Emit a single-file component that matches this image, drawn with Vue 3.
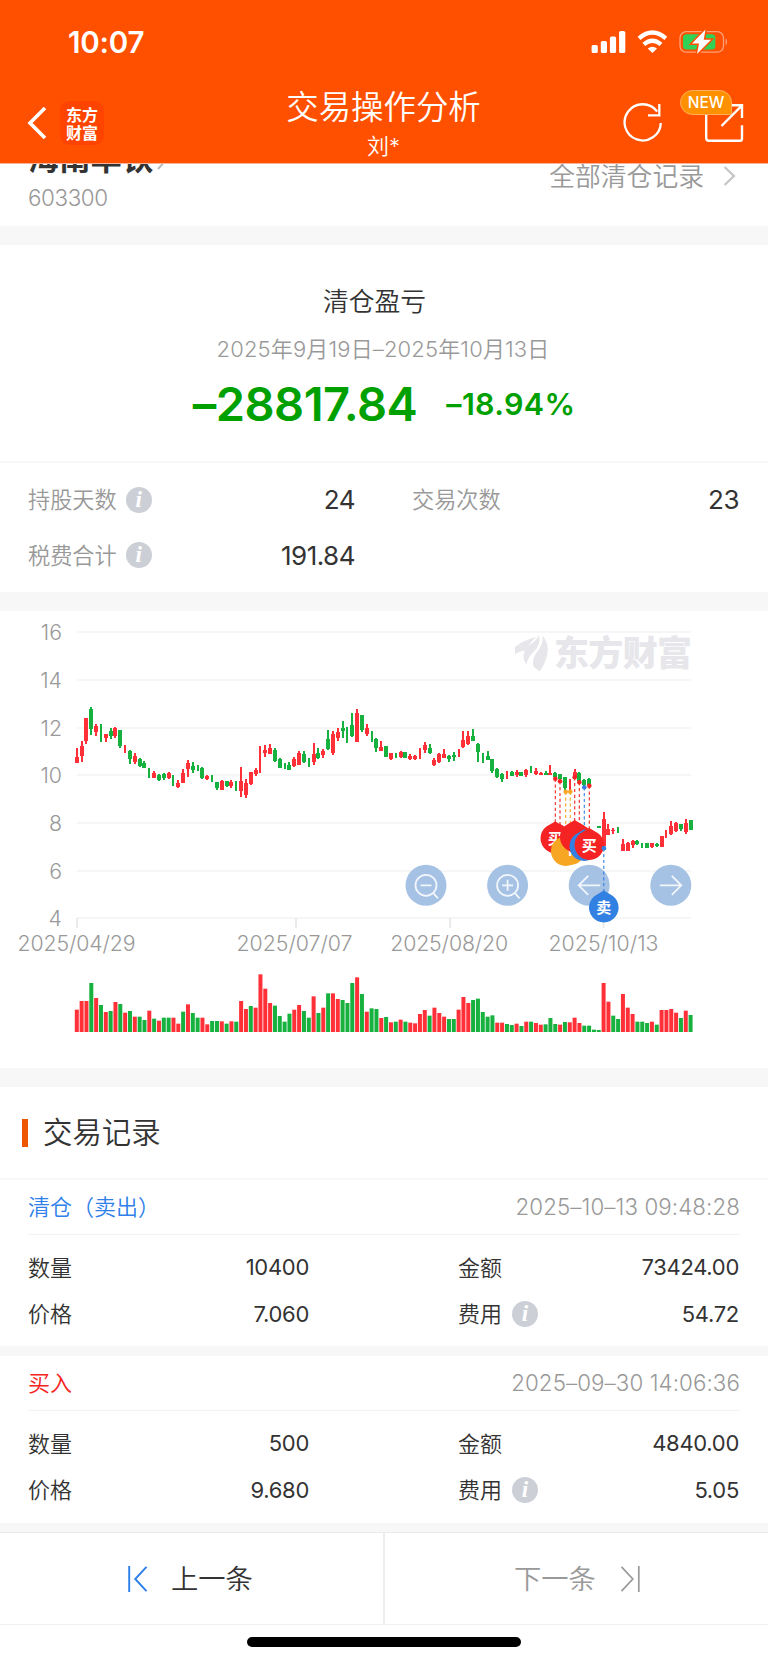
<script setup>
/**
 * 交易操作分析 — 个股清仓盈亏、K线买卖点与交易记录
 */
const UP = '#ff3037'
const DOWN = '#16b13e'
const STEP = 4.833
const FIRST_X = 76.8

// 每根K线: 涨跌, 最高, 最低, 实体上沿, 实体下沿 (单位 1/3 像素, 无实体时省略)
const candleSource = `
r411,455,437,455 r391,453,404,434 r322,398,322,390 g288,372,293,355 r340,376,346,362 g340,392 r368,393,368,382 g351,384,360,375
r349,382,350,376 g356,410,357,406 r402,425 g418,460,419,444 r427,459,434,452 g440,468,443,465 g449,470,455,470 g470,502
r480,500,487,500 g489,509,492,507 g485,507,490,500 r484,503,487,502 g492,524 r507,532,515,527 r475,517,486,517 r446,498,457,473
g453,487,464,478 g461,481 g469,503,470,500 r491,508,495,505 g492,514 g512,537,514,530 r507,538,509,537 g509,527,511,524
r506,530,513,524 g511,539 r468,558,511,541 r503,562,516,551 r483,521,484,520 r471,494,476,490 r404,485 r401,438,418,425
r398,430,411,428 g412,452,417,450 g441,472,445,470 g457,475 g454,478,462,478 r437,468,445,466 r419,463,427,461 g419,455,430,453
g442,469 r396,461,430,452 g412,443,425,440 r415,441,420,433 g357,417,384,415 r359,433,370,425 r350,391,363,380 g331,380,350,361
g349,396 g307,377,342,376 r294,394,306,393 g311,362,312,357 r340,376,350,370 g360,392 g382,422,383,412 r389,421,408,419
g405,439,406,438 r426,447,427,443 g425,441 r419,441,422,438 g423,441,424,440 r430,447,435,443 r432,446,434,445 r411,443
r392,426,403,417 g400,428,411,427 r440,466,446,461 r427,455,430,453 r415,442,428,440 g432,453,435,444 g423,451,431,439 r415,439
r360,411,386,408 r361,402,376,398 g355,390,374,389 g397,452,398,423 g426,456 g421,448,434,447 g443,485,444,480 g470,500,473,498
g485,514,490,505 r480,505 g480,495,482,494 r477,497,483,492 g482,496,484,495 r475,498,477,493 g464,486 r470,493,480,490
r483,493,486,491 g479,493,486,491 r463,492,486,491 g482,503,486,497 g488,510,489,503 g497,541,498,530 r503,540 r473,500,482,497
g484,515,485,510 g504,528,507,522 g501,524,503,521 - g646,652,646,652 r602,710,625,706 r640,673,655,671 r651,668,656,661
g647,667 r685,721,698,720 r693,721,696,720 r688,711,690,703 g688,702,691,698 g697,711 g695,711,697,710 r696,711,697,709
g696,708,698,706 r674,708,675,707 r657,681 r631,672,644,670 r633,664,636,660 g638,659,639,655 r623,670,635,664 g627,657,628,656`

const candles = candleSource.trim().split(/\s+/).map((s, i) => {
  if (s === '-') return null
  const [hi, lo, top, bottom] = s.slice(1).split(',').map((n) => Number(n) / 3)
  return { x: FIRST_X + i * STEP, color: s[0] === 'r' ? UP : DOWN, hi, lo, top, bottom }
}).filter(Boolean)

// 成交量: 涨跌 + 柱高 (1/3 像素)
const volumeSource = `
r67 r93 r93 g147 r102 g81 r60 g63 r90 g84 r58 g63 r46 g46 g36 r64 g40 r34 g43 g43 r43 r25 g61 r83 g57 g43 r43 r23 g33 g33 r32 g25
r32 g31 r93 r69 g78 r73 r173 r130 r87 g79 g48 g31 g55 r67 r81 g63 g43 r107 g57 r73 g116 r116 r99 g96 g87 g147 r164 g114 r61 g71 g69 r42
g45 r29 g31 r37 g31 r28 r26 r54 r66 g49 r73 r57 r46 g39 g39 r67 r105 r87 g96 g100 g60 g46 g50 r28 r28 g24 g21 r25 g18 r31 g31 r27
r22 g23 g42 g24 r22 g30 r29 r43 r27 g19 g19 g7 g6 r147 r91 g49 g39 r114 r73 r54 g31 g31 g27 r31 g22 r66 r66 r69 r58 g42 r64 g51`

const volumes = volumeSource.trim().split(/\s+/).map((s, i) => ({
  x: FIRST_X + i * STEP - 2,
  h: Number(s.slice(1)) / 3,
  color: s[0] === 'r' ? UP : DOWN,
}))

const yAxis = [
  { v: 16, y: 21 }, { v: 14, y: 69 }, { v: 12, y: 117 }, { v: 10, y: 164 },
  { v: 8, y: 212 }, { v: 6, y: 260 }, { v: 4, y: 307 },
]
const xAxis = [
  { d: '2025/04/29', x: 77, w: 118, tx: 76.5 }, { d: '2025/07/07', x: 296, w: 116, tx: 294.5 },
  { d: '2025/08/20', x: 450, w: 118, tx: 449.2 }, { d: '2025/10/13', x: 603.5, w: 110 },
]

const RED = '#f52323'
const ORANGE = '#f6a623'
const BLUE = '#3380e3'
const marks = [
  { x: 560, dot: 170.3, cy: 230, c: RED, t: '' },
  { x: 555.3, dot: 167.7, cy: 227.3, c: RED, t: '买' },
  { x: 565.7, dot: 180.7, cy: 240, c: ORANGE, t: '' },
  { x: 570.3, dot: 180.7, cy: 239, c: ORANGE, t: 'T' },
  { x: 574.7, dot: 166.3, cy: 226, c: RED, t: '' },
  { x: 579.3, dot: 171.3, cy: 229, c: RED, t: '' },
  { x: 584.3, dot: 176.3, cy: 235.2, c: BLUE, t: '' },
  { x: 589.3, dot: 174.7, cy: 234, c: RED, t: '买' },
  { x: 603.8, dot: 237.3, cy: 296.5, c: BLUE, t: '卖' },
]
const pin = 'M0 -16.9L6.3 -13.3A14.8 14.8 0 1 1 -6.3 -13.3Z'

const buttons = [{ x: 426, k: 'out' }, { x: 507.6, k: 'in' }, { x: 589.2, k: 'left' }, { x: 670.8, k: 'right' }]

const records = [
  { type: '清仓（卖出）', side: 'sell', time: '2025–10–13 09:48:28', qty: '10400', amount: '73424.00', price: '7.060', fee: '54.72' },
  { type: '买入', side: 'buy', time: '2025–09–30 14:06:36', qty: '500', amount: '4840.00', price: '9.680', fee: '5.05' },
]
</script>

<template>
  <div class="page">
    <header class="header">
      <div class="status">
        <span class="clock">10:07</span>
        <svg width="140" height="28" viewBox="0 0 140 28">
          <g fill="#fff">
            <rect x="1.6" y="17" width="6.2" height="8" rx="1.6" />
            <rect x="10.8" y="13" width="6.2" height="12" rx="1.6" />
            <rect x="19.9" y="8.5" width="6.2" height="16.5" rx="1.6" />
            <rect x="29.1" y="3" width="6.2" height="22" rx="1.6" />
            <path d="M62.4 25L57.7 20.6Q62.4 17 67.1 20.6Z" />
          </g>
          <g fill="none" stroke="#fff" stroke-width="4.3">
            <path d="M49 10.4Q62.4 -1.2 75.8 10.4" />
            <path d="M53.8 16.4Q62.4 9 71 16.4" />
          </g>
          <rect x="90" y="3.6" width="43.5" height="20.6" rx="6.2" fill="none" stroke="#ffa07b" stroke-width="1.3" />
          <path d="M135.6 10.2Q138.8 13.8 135.6 17.4Z" fill="#ffa07b" />
          <rect x="93" y="6.2" width="32.4" height="15.4" rx="3.5" fill="#31d158" />
          <path d="M115.5 1.5L102 15.6H109L107 26L121 11.7H113.7Z" fill="#fff" stroke="#ff5000" stroke-width="3" paint-order="stroke" />
        </svg>
      </div>
      <div class="navbar">
        <div class="nav-left">
          <svg width="20" height="34" viewBox="0 0 20 34"><path d="M18 2L3 17L18 32" fill="none" stroke="#fff" stroke-width="3.6" /></svg>
          <div class="logo"><span>东方</span><span>财富</span></div>
        </div>
        <div class="nav-title">
          <h1>交易操作分析</h1>
          <p>刘*</p>
        </div>
        <div class="nav-right">
          <svg width="42" height="42" viewBox="0 0 42 42" fill="none" stroke="#fff" stroke-width="2.3">
            <path d="M38.8 22A18.1 18.1 0 1 1 35.2 10.5" />
            <path d="M37.3 3V14.3H26" />
          </svg>
          <div class="share">
            <svg width="40" height="40" viewBox="0 0 40 40" fill="none" stroke="#fff" stroke-width="2.4">
              <path d="M2.2 12V35Q2.2 37.8 5 37.8H36Q38 37.8 38 35.5V22.3" />
              <path d="M27 2.3H38V15M38 2.3L17.5 23" />
            </svg>
            <span class="new">NEW</span>
          </div>
        </div>
      </div>
    </header>

    <section class="stock">
      <div>
        <div class="stock-name">海南华铁
          <svg width="12" height="22" viewBox="0 0 12 22"><path d="M1 1L10 11L1 21" fill="none" stroke="#bbb" stroke-width="2" /></svg>
        </div>
        <div class="stock-code">603300</div>
      </div>
      <div class="all">
        <span>全部清仓记录</span>
        <svg width="14" height="22" viewBox="0 0 14 22"><path d="M1.5 2L11 11L1.5 20" fill="none" stroke="#c4c4c4" stroke-width="2.2" /></svg>
      </div>
    </section>

    <section class="profit">
      <h2>清仓盈亏</h2>
      <p class="range">2025年9月19日–2025年10月13日</p>
      <div class="result"><span class="sum">–28817.84</span><span class="rate">–18.94%</span></div>
    </section>

    <section class="stats">
      <div class="stat"><span>持股天数</span><i class="info">i</i><b>24</b></div>
      <div class="stat"><span>交易次数</span><b>23</b></div>
      <div class="stat"><span>税费合计</span><i class="info">i</i><b>191.84</b></div>
    </section>

    <section class="chart">
      <svg width="768" height="457" viewBox="0 0 768 457">
        <g v-for="t in yAxis" :key="t.v">
          <line x1="77" x2="691" :y1="t.y" :y2="t.y" stroke="#f3f3f3" stroke-width="1.6" />
          <text class="axis" x="62" :y="t.y + 7.8" text-anchor="end">{{ t.v }}</text>
        </g>
        <g v-for="t in xAxis" :key="t.d">
          <line :x1="t.x" :x2="t.x" y1="307" y2="317" stroke="#e6e6e6" stroke-width="1.6" />
          <text class="axis" :x="(t.tx || t.x) - t.w / 2" y="340.2" :textLength="t.w">{{ t.d }}</text>
        </g>

        <g fill="#e6e6eb" transform="translate(0 -10.5)">
          <path d="M515 46.5Q522 40.5 536 36.5Q528 44 526.5 50Q520 50 515 54Z" />
          <path d="M539 34.8Q541.5 43 533.5 51.5Q528 56 526.5 64L523.5 58.5Q523 49 531 43.5Q536.5 40 539 34.8Z" />
          <path d="M542.5 35Q549 43 547.5 53Q545 64 539.5 71L533.5 66Q531.5 58 537.5 51Q543.5 44 542.5 35Z" />
          <text class="watermark" x="554" y="65.5" textLength="138">东方财富</text>
        </g>

        <g v-for="(c, i) in candles" :key="i" :fill="c.color" shape-rendering="crispEdges">
          <rect :x="c.x - 1" :y="c.hi" width="2" :height="c.lo - c.hi" />
          <rect v-if="c.top" :x="c.x - 2" :y="c.top" width="4" :height="c.bottom - c.top" />
        </g>

        <g v-for="b in buttons" :key="b.k" :transform="`translate(${b.x} 274.3)`" fill="none" stroke="#fff" stroke-opacity=".85" stroke-width="1.8">
          <circle r="20.5" fill="#a5c2e5" stroke="none" />
          <template v-if="b.k === 'out' || b.k === 'in'">
            <circle r="10.5" />
            <path :d="b.k === 'out' ? 'M-5.5 0H5.5M7.5 8L12 13' : 'M-5.5 0H5.5M0 -5.5V5.5M7.5 8L12 13'" />
          </template>
          <path v-else :d="b.k === 'left' ? 'M11 0H-10.5M-1 -9.5L-10.5 0L-1 9.5' : 'M-11 0H10.5M1 -9.5L10.5 0L1 9.5'" />
        </g>

        <g v-for="m in marks" :key="m.x">
          <line :x1="m.x" :x2="m.x" :y1="m.dot" :y2="m.cy - 16" :stroke="m.c" stroke-width="1.1" stroke-dasharray="3.2 2.6" />
          <circle :cx="m.x" :cy="m.dot" r="2.3" :fill="m.c" />
        </g>
        <g v-for="m in marks" :key="m.x" :transform="`translate(${m.x} ${m.cy})`">
          <path :d="pin" :fill="m.c" />
          <text v-if="m.t" class="pin-text" y="5.6" text-anchor="middle">{{ m.t }}</text>
        </g>
        <circle cx="603.8" cy="237.3" r="2.3" :fill="BLUE" />

        <rect v-for="v in volumes" :key="v.x" :x="v.x" :y="421 - v.h" width="4" :height="v.h" :fill="v.color" />
      </svg>
    </section>

    <section class="records">
      <div class="records-title"><h3><span>交易记录</span></h3></div>
      <article v-for="r in records" :key="r.time" class="record">
        <div class="record-head">
          <span :class="r.side">{{ r.type }}</span>
          <time>{{ r.time }}</time>
        </div>
        <div class="record-body">
          <div class="cell"><span>数量</span><b>{{ r.qty }}</b></div>
          <div class="cell"><span>金额</span><b>{{ r.amount }}</b></div>
          <div class="cell"><span>价格</span><b>{{ r.price }}</b></div>
          <div class="cell"><span>费用</span><i class="info">i</i><b>{{ r.fee }}</b></div>
        </div>
      </article>
    </section>

    <nav class="pager">
      <div class="prev">
        <svg width="20" height="28" viewBox="0 0 20 28" fill="none" stroke="#2b7fe8" stroke-width="1.9"><path d="M1.2 1V27M18.5 1.8L7.2 14L18.5 26.2" /></svg>
        <span>上一条</span>
      </div>
      <div class="next">
        <span>下一条</span>
        <svg width="20" height="28" viewBox="0 0 20 28" fill="none" stroke="#999" stroke-width="1.7"><path d="M18.8 1V27M1.5 1.8L12.8 14L1.5 26.2" /></svg>
      </div>
    </nav>
    <div class="home"><div class="home-bar" /></div>
  </div>
</template>

<style>
body { background: #fff; }
</style>

<style scoped>
.page { width: 768px; height: 1663px; overflow: hidden; background: #fff; color: #333; font-family: Inter, "Noto Sans CJK SC", sans-serif; font-weight: 350; }
h1, h2, h3, p { margin: 0; font-weight: 350; }
b { font-weight: 400; }
svg { display: block; flex: none; }

.header { height: 164px; background: #ff5000; color: #fff; border-bottom: 1px solid #f6b29a; box-sizing: border-box; }
.status { height: 84px; box-sizing: border-box; padding: 28px 38px 0 68px; display: flex; justify-content: space-between; }
.clock { font-size: 29.5px; line-height: 29px; font-weight: 600; letter-spacing: -0.2px; }
.navbar { height: 79px; display: grid; grid-template-columns: 1fr 220px 1fr; }
.nav-left { display: flex; align-items: flex-start; gap: 13px; padding: 17px 0 0 27px; }
.nav-left svg { margin-top: 5px; }
.logo { width: 44px; height: 44px; border-radius: 9px; background: #ff4400; display: flex; flex-direction: column; align-items: center; justify-content: center; font: 700 16px/18px "Noto Sans CJK SC", sans-serif; }
.nav-title { text-align: center; }
.nav-title h1 { font-size: 32.4px; line-height: 48px; margin-left: -1px; }
.nav-title p { font-size: 22px; line-height: 28px; margin-left: -1px; }
.nav-right { display: flex; justify-content: flex-end; gap: 40px; padding: 17px 24px 0 0; }
.share { position: relative; margin-top: 2px; }
.new { position: absolute; left: -24px; top: -13px; width: 52px; height: 25px; box-sizing: border-box; border: 1px solid #ffae5c; border-radius: 13px 13px 2px 13px; background: #ff9100; font-size: 15.5px; line-height: 23px; font-weight: 500; text-align: center; }

.stock { height: 62px; box-sizing: border-box; padding: 0 31px 0 28px; display: flex; justify-content: space-between; overflow: hidden; }
.stock-name { display: flex; align-items: center; gap: 4px; font-size: 31.3px; line-height: 40px; font-weight: 700; margin-top: -25px; }
.stock-code { font-size: 22.4px; line-height: 28px; margin-top: 5px; color: #999; letter-spacing: -0.4px; }
.all { display: flex; align-items: center; gap: 19px; height: 36px; margin-top: -6px; font-size: 25.8px; color: #999; }
.all span { padding-bottom: 4px; }

.profit { height: 179px; border-top: 19px solid #f7f7f7; border-bottom: 2px solid #f7f7f7; padding-top: 38px; box-sizing: border-box; height: 237px; display: flex; flex-direction: column; align-items: center; }
.profit h2 { font-size: 25.8px; line-height: 38px; margin-left: -19px; }
.range { font-size: 22px; line-height: 30px; margin: 13px 0 0 -2px; color: #999; letter-spacing: 0.15px; }
.result { display: flex; align-items: center; gap: 29px; margin-top: 11px; height: 56px; color: #00a000; white-space: nowrap; }
.sum { font-size: 47px; font-weight: 570; letter-spacing: -0.5px; }
.rate { font-size: 30.5px; font-weight: 570; letter-spacing: 0.3px; }

.stats { height: 129px; box-sizing: border-box; padding: 9px 29px 0 28px; display: grid; grid-template-columns: 327px 327px; column-gap: 57px; grid-auto-rows: 55.5px; }
.stat { display: flex; align-items: center; font-size: 22.2px; color: #999; }
.stat span { padding-bottom: 3px; }
.stat b { margin-left: auto; font-size: 26px; color: #333; letter-spacing: -0.5px; }
.info { width: 26px; height: 26px; margin-left: 9px; border-radius: 50%; background: #ccd0d6; color: #fff; font: italic 700 23px/25px "Liberation Serif", serif; text-align: center; }
.cell .info { margin-left: 10px; }

.chart { height: 457.5px; border-top: 18.5px solid #f7f7f7; border-bottom: 19px solid #f7f7f7; padding-top: 0.5px; }
.axis { font-size: 21.3px; fill: #999; }
.watermark { font-size: 35px; font-weight: 900; }
.pin-text { font-size: 15px; fill: #fff; font-weight: 700; }

.chart { height: 457px; border-top-width: 19px; padding-top: 0; }
.records-title { height: 91px; display: flex; align-items: center; padding-left: 22px; }
.records-title h3 { display: flex; align-items: center; gap: 15px; font-size: 29.4px; }
.records-title h3::before { content: ""; width: 6px; height: 28px; background: #ee5500; }
.records-title span { padding-bottom: 5px; }
.record { height: 166px; border-top: 2px solid #f7f7f7; border-bottom: 10px solid #f7f7f7; }
.record + .record { height: 167px; border-top: 0; border-bottom-width: 9px; }
.record-head { height: 54px; margin: 0 28px; border-bottom: 1px solid #f3f3f3; display: flex; align-items: center; justify-content: space-between; font-size: 22px; }
.record-head span { padding-bottom: 5px; }
.record-head time { font-size: 22.3px; color: #999; letter-spacing: 0.1px; padding-bottom: 1px; }
.sell { color: #2f80ea; }
.buy { color: #f52323; }
.record-body { padding: 9px 29px 0 28px; display: grid; grid-template-columns: 281px 281px; column-gap: 149px; grid-auto-rows: 46.5px; }
.cell { display: flex; align-items: center; font-size: 22px; }
.cell span { padding-bottom: 3px; }
.cell b { margin-left: auto; font-size: 22px; letter-spacing: -0.3px; }

.pager { height: 93px; box-sizing: border-box; border-top: 1px solid #eaeaea; border-bottom: 1px solid #f0f0f0; display: grid; grid-template-columns: 385px 1fr; font-size: 27.3px; }
.pager > div { display: flex; align-items: center; }
.pager span { padding-bottom: 3px; }
.prev { border-right: 2px solid #eee; padding-left: 128px; gap: 23px; }
.next { padding-left: 129px; gap: 24px; color: #999; }
.home { padding-top: 12px; display: flex; justify-content: center; }
.home-bar { width: 274px; height: 10px; border-radius: 5px; background: #000; }
</style>
